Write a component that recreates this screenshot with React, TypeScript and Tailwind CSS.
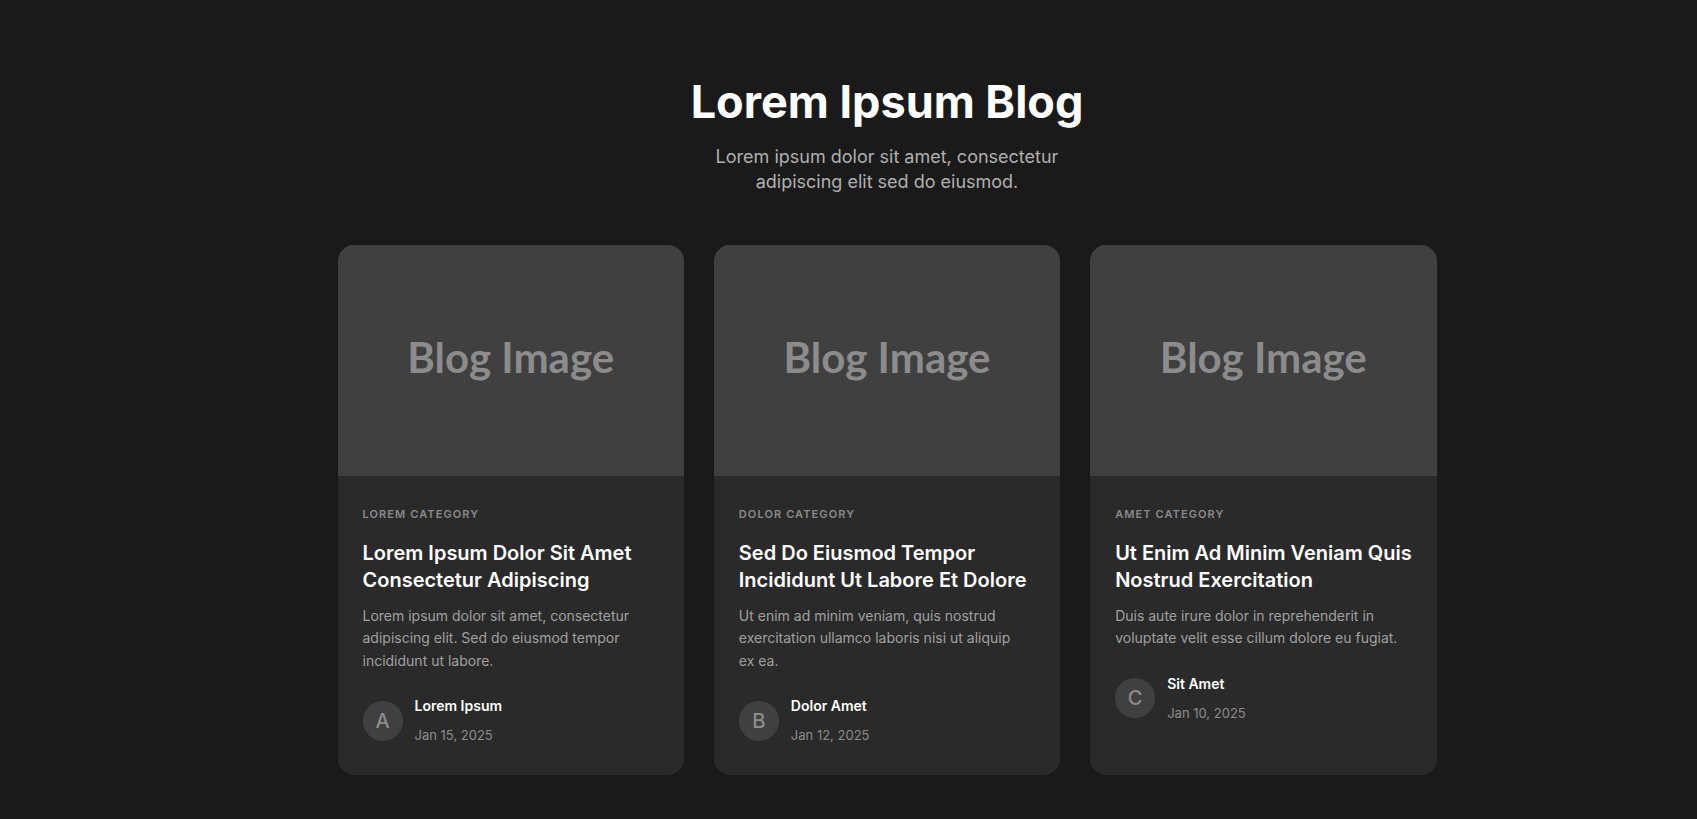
// Blog listing page: dark header + three placeholder post cards.

const POSTS = [
  {
    category: 'Lorem Category',
    title: 'Lorem Ipsum Dolor Sit Amet Consectetur Adipiscing',
    excerpt: 'Lorem ipsum dolor sit amet, consectetur adipiscing elit. Sed do eiusmod tempor incididunt ut labore.',
    initial: 'A',
    author: 'Lorem Ipsum',
    date: 'Jan 15, 2025',
  },
  {
    category: 'Dolor Category',
    title: 'Sed Do Eiusmod Tempor Incididunt Ut Labore Et Dolore',
    excerpt: 'Ut enim ad minim veniam, quis nostrud exercitation ullamco laboris nisi ut aliquip ex ea.',
    initial: 'B',
    author: 'Dolor Amet',
    date: 'Jan 12, 2025',
  },
  {
    category: 'Amet Category',
    title: 'Ut Enim Ad Minim Veniam Quis Nostrud Exercitation',
    excerpt: 'Duis aute irure dolor in reprehenderit in voluptate velit esse cillum dolore eu fugiat.',
    initial: 'C',
    author: 'Sit Amet',
    date: 'Jan 10, 2025',
  },
]

function PostCard({ post }: { post: (typeof POSTS)[number] }) {
  return (
    <article className="flex flex-col overflow-hidden rounded-2xl bg-[#2a2a2a]">
      {/* Image placeholder */}
      <div className="flex h-[231px] items-center justify-center bg-[#404040] pb-[6px]">
        <span className="font-['Lato',sans-serif] text-[42px] font-bold text-[#8c8c8c]">
          Blog Image
        </span>
      </div>

      <div className="pl-[25px] pr-[23px] pt-[30px] pb-[30px]">
        <p className="text-[11px] font-semibold uppercase tracking-[0.1em] text-[#8a8a8a]">
          {post.category}
        </p>
        <h2 className="mt-[17px] text-[20px] font-semibold leading-[27px] text-white">
          {post.title}
        </h2>
        <p className="mt-[11px] max-w-[289px] text-sm leading-[22.5px] text-[#a0a0a0]">
          {post.excerpt}
        </p>

        <div className="mt-6 flex items-center gap-3">
          <div className="grid h-10 w-10 shrink-0 place-items-center rounded-full bg-[#404040] text-xl font-medium text-[#8c8c8c]">
            {post.initial}
          </div>
          <div>
            <p className="text-sm font-semibold leading-5 text-white">{post.author}</p>
            <p className="mt-[9px] text-[13px] leading-5 text-[#8c8c8c]">{post.date}</p>
          </div>
        </div>
      </div>
    </article>
  )
}

export default function App() {
  return (
    <div className="min-h-screen bg-[#1a1a1a] font-['Inter',sans-serif] pl-[77px]">
      <div className="mx-auto w-[1099px] pt-[74px] pb-16">
        <header className="text-center">
          <h1 className="text-[45px] font-bold leading-tight text-white">Lorem Ipsum Blog</h1>
          <p className="mx-auto mt-[14px] max-w-[370px] text-lg leading-[25px] text-[#b0b0b0]">
            Lorem ipsum dolor sit amet, consectetur adipiscing elit sed do eiusmod.
          </p>
        </header>

        <div className="mt-[51px] grid grid-cols-3 gap-[30px]">
          {POSTS.map((p) => (
            <PostCard key={p.initial} post={p} />
          ))}
        </div>
      </div>
    </div>
  )
}
